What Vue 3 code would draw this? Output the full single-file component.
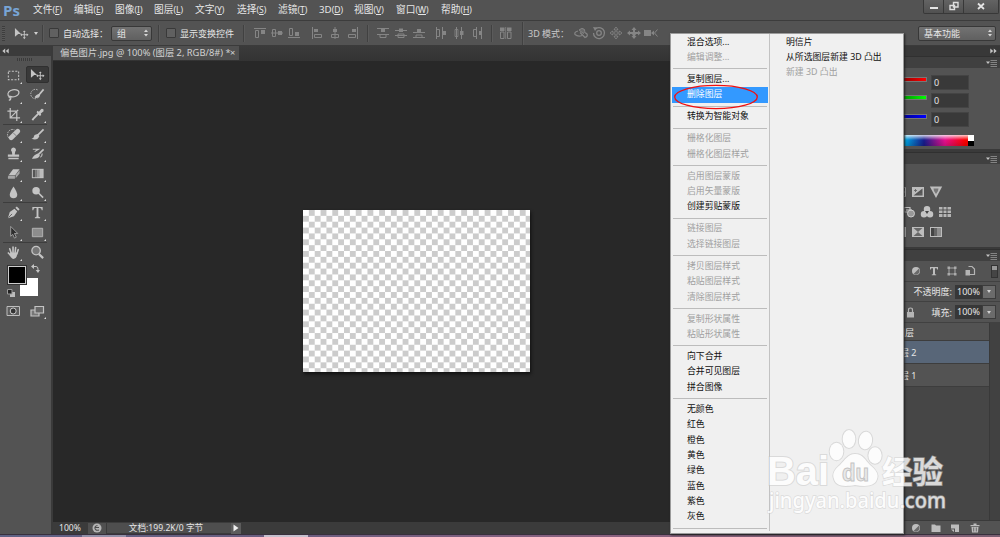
<template>
  <div class="app">
    <header class="menubar">
      <span class="logo">Ps</span>
      <nav class="menus">
        <span v-for="m in menus" :key="m.key" class="menu" :style="{ width: m.w + 'px' }">
          {{ m.label }}<small>(<u>{{ m.key }}</u>)</small>
        </span>
      </nav>
      <div class="window-buttons">
        <span class="win"><Icon name="minimize" :w="12" :h="12" /></span>
        <span class="win"><Icon name="restore" :w="12" :h="12" /></span>
        <span class="win close"><Icon name="close" :w="12" :h="12" /></span>
      </div>
    </header>

    <div class="options">
      <span class="grip"></span>
      <Icon class="opt-move" name="move" :w="15" :h="15" />
      <i class="tri opt-tri"></i>
      <i class="vsep"></i>
      <i class="check"></i>
      <span class="opt-label auto">自动选择：</span>
      <span class="select group">组<Icon name="updown" :w="8" :h="10" /></span>
      <i class="vsep after-group"></i>
      <i class="check"></i>
      <span class="opt-label show">显示变换控件</span>
      <i class="vsep"></i>
      <div class="align-icons g1"><Icon v-for="n in ['alT', 'alM', 'alB']" :key="n" :name="n" :w="12" :h="12" /></div>
      <div class="align-icons g2"><Icon v-for="n in ['alL', 'alC', 'alR']" :key="n" :name="n" :w="12" :h="12" /></div>
      <i class="vsep"></i>
      <div class="align-icons g3"><Icon v-for="n in ['diT', 'diM', 'diB']" :key="n" :name="n" :w="12" :h="12" /></div>
      <div class="align-icons g4"><Icon v-for="n in ['diL', 'diC', 'diR']" :key="n" :name="n" :w="12" :h="12" /></div>
      <i class="vsep"></i>
      <Icon class="auto-align" name="autoAlign" :w="12" :h="12" />
      <i class="vsep full"></i>
      <span class="opt-label mode">3D 模式：</span>
      <div class="mode-icons"><Icon v-for="n in ['orbit', 'roll', 'pan', 'slide', 'camera']" :key="n" :name="n" :w="14" :h="14" /></div>
      <span class="select workspace">基本功能<Icon name="updown" :w="8" :h="10" /></span>
    </div>

    <div class="body">
      <aside class="tools">
        <div class="tools-head"><Icon name="collapse" :w="7" :h="6" /></div>
        <div class="tools-grip"></div>
        <template v-for="(section, i) in toolSections" :key="i">
          <div class="tool-section">
            <span v-for="t in section" :key="t" class="tool" :class="{ active: t === 'move' }">
              <Icon :name="t" :w="15" :h="15" />
              <i v-if="t !== 'zoom' && t !== 'move'" class="corner"></i>
            </span>
          </div>
          <div v-if="i < toolSections.length - 1" class="hsep"></div>
        </template>
        <div class="swatches">
          <span class="bg"></span>
          <span class="fg"></span>
          <Icon class="swap" name="swap" :w="9" :h="9" />
          <Icon class="reset" name="reset" :w="8" :h="8" />
        </div>
        <div class="tool-section modes">
          <span class="tool"><Icon name="mask" :w="16" :h="16" /></span>
          <span class="tool"><Icon name="screen" :w="16" :h="16" /><i class="corner"></i></span>
        </div>
      </aside>

      <main class="document">
        <div class="tabs">
          <div class="tab"><span class="tab-name">偏色图片.jpg @ 100% (图层 2, RGB/8#) *</span><span>×</span></div>
        </div>
        <div class="stage"><div class="canvas"></div></div>
        <div class="status">
          <span class="zoom-level">100%</span>
          <span class="drive"><Icon name="drive" :w="10" :h="10" /></span>
          <span class="doc-size">文档:199.2K/0 字节</span>
          <span class="play"><Icon name="play" :w="6" :h="8" /></span>
        </div>
      </main>

      <aside class="panels">
        <div class="dock-head"><Icon name="expand" :w="7" :h="6" /></div>
        <div class="panel-tab"><Icon name="panelMenu" :w="11" :h="8" /></div>
        <section class="color">
          <div v-for="c in channels" :key="c" class="channel">
            <span class="track" :class="c"></span>
            <span class="value">0</span>
          </div>
          <div class="spectrum"><span class="hues"></span><span class="bw"></span></div>
        </section>
        <div class="panel-tab"><Icon name="panelMenu" :w="11" :h="8" /></div>
        <section class="adjust">
          <div class="adj-row r1"><Icon v-for="n in ['curves', 'exposure', 'vibrance']" :key="n" :name="n" :w="14" :h="14" /></div>
          <div class="adj-row r2"><Icon v-for="n in ['filter', 'mixer', 'lookup']" :key="n" :name="n" :w="14" :h="14" /></div>
          <div class="adj-row r1"><Icon v-for="(n, i) in ['selective', 'selective', 'gradmap']" :key="i" :name="n" :w="14" :h="14" /></div>
        </section>
        <div class="panel-tab"><Icon name="panelMenu" :w="11" :h="8" /></div>
        <section class="layers">
          <div class="filter-row">
            <Icon v-for="n in ['half', 'typeSmall', 'shape', 'smart']" :key="n" :name="n" :w="12" :h="12" />
            <span class="toggle"></span>
          </div>
          <div class="prop-row"><span>不透明度:</span><b>100%</b><i class="drop"><i class="tri"></i></i></div>
          <div class="prop-row fill"><Icon name="lock" :w="9" :h="11" /><span>填充:</span><b>100%</b><i class="drop"><i class="tri"></i></i></div>
          <div class="layer-list">
            <div class="rows">
              <div class="layer first">组合图层</div>
              <div class="layer selected">图层 2</div>
              <div class="layer">图层 1</div>
            </div>
            <div class="scroll"></div>
          </div>
          <div class="layer-foot">
            <Icon v-for="n in ['half', 'folder', 'newLayer', 'trash']" :key="n" :name="n" :w="12" :h="12" />
          </div>
        </section>
      </aside>
    </div>

    <footer class="taskbar"><i class="task t1"></i><i class="task t2"></i></footer>

    <div class="context">
      <div class="context-col">
        <template v-for="(group, i) in contextGroups" :key="i">
          <div v-for="item in group" :key="item" class="item" :class="{ off: item[0] === '-', hot: item === '删除图层' }">
            {{ item.replace('-', '') }}
          </div>
          <div class="line"></div>
        </template>
      </div>
      <div class="context-col second">
        <div class="item">明信片</div>
        <div class="item">从所选图层新建 3D 凸出</div>
        <div class="item off">新建 3D 凸出</div>
      </div>
    </div>

    <svg class="marker" viewBox="0 0 86 26" width="86" height="26">
      <ellipse cx="43" cy="13" rx="41.3" ry="11.6" fill="none" stroke="#f01010" stroke-width="1.3" />
    </svg>

    <svg class="watermark" viewBox="0 0 190 100" width="190" height="100">
      <g fill="#fff" stroke="#c8c8c8" stroke-opacity=".65" stroke-width="2" paint-order="stroke" opacity=".85">
        <text class="wm-bold" x="3" y="61" font-size="40" textLength="62" lengthAdjust="spacingAndGlyphs">Bai</text>
        <ellipse cx="72.500" cy="27.500" rx="6.800" ry="8.800" />
        <ellipse cx="85" cy="15" rx="6.300" ry="9" />
        <ellipse cx="101.500" cy="16.500" rx="6.600" ry="8.800" transform="rotate(8 101.500 16.500)" />
        <ellipse cx="111" cy="31.500" rx="6.600" ry="8.300" />
        <path d="M91 30C84 30 81 36 76 41C70 46 68 50 70 55C72 62 79 63 91 61C103 63 111 62 113 55C115 50 112 46 106 41C101 36 99 30 91 30Z" />
      </g>
      <text class="wm-du" x="78" y="57" font-size="24" textLength="27" lengthAdjust="spacingAndGlyphs">du</text>
      <g fill="#fff" stroke="#c8c8c8" stroke-opacity=".65" paint-order="stroke" opacity=".8">
        <text class="wm-cjk" x="118" y="58.500" font-size="30.500" stroke-width="1.500" textLength="61" lengthAdjust="spacingAndGlyphs">经验</text>
        <text class="wm-url" x="5" y="84" font-size="21" stroke-width="1.400" textLength="177" lengthAdjust="spacingAndGlyphs">jingyan.baidu.com</text>
      </g>
    </svg>
  </div>
</template>

<script setup>
import { h } from 'vue';

const menus = [
  { label: '文件', key: 'F', w: 41 },
  { label: '编辑', key: 'E', w: 41 },
  { label: '图像', key: 'I', w: 39 },
  { label: '图层', key: 'L', w: 41 },
  { label: '文字', key: 'Y', w: 42 },
  { label: '选择', key: 'S', w: 41 },
  { label: '滤镜', key: 'T', w: 41 },
  { label: '3D', key: 'D', w: 35 },
  { label: '视图', key: 'V', w: 42 },
  { label: '窗口', key: 'W', w: 45 },
  { label: '帮助', key: 'H', w: 40 }
];

const toolSections = [
  ['marquee', 'move', 'lasso', 'quick', 'crop', 'eyedropper'],
  ['heal', 'brush', 'stamp', 'history', 'eraser', 'gradient', 'blur', 'dodge'],
  ['pen', 'type', 'path', 'rect'],
  ['hand', 'zoom']
];

const channels = ['red', 'green', 'blue'];

// a leading "-" marks a disabled entry
const contextGroups = [
  ['混合选项...', '-编辑调整...'],
  ['复制图层...', '删除图层'],
  ['转换为智能对象'],
  ['-栅格化图层', '-栅格化图层样式'],
  ['-启用图层蒙版', '-启用矢量蒙版', '创建剪贴蒙版'],
  ['-链接图层', '-选择链接图层'],
  ['-拷贝图层样式', '-粘贴图层样式', '-清除图层样式'],
  ['-复制形状属性', '-粘贴形状属性'],
  ['向下合并', '合并可见图层', '拼合图像'],
  ['无颜色', '红色', '橙色', '黄色', '绿色', '蓝色', '紫色', '灰色']
];

const L = '#c4c4c4';
const D = '#858585';
const f = (d, fill = L) => ({ d, fill });
const s = (d, stroke = L, w = 1, extra = {}) => ({ d, fill: 'none', stroke, 'stroke-width': w, ...extra });

// [viewBox width, viewBox height, shapes]
const icons = {
  minimize: [12, 12, [f('M2 7H10V9H2Z', '#e4e4e4')]],
  restore: [12, 12, [s('M5.500 2.500H10V7H5.500ZM2 5.500H6.500V9.500H2Z', '#dedede', 1.4)]],
  close: [12, 12, [s('M3 3.500L9 9M9 3.500L3 9', '#e4e4e4', 1.8)]],
  updown: [8, 10, [f('M2 4L4 1.500L6 4ZM2 6H6L4 8.500Z', '#d8d8d8')]],
  collapse: [7, 6, [f('M3.200 .5V5.500L.3 3ZM6.700 .5V5.500L3.800 3Z')]],
  expand: [7, 6, [f('M.3 .5V5.500L3.200 3ZM3.800 .5V5.500L6.700 3Z')]],
  panelMenu: [11, 8, [f('M0 2.500H4L2 5Z'), s('M4.500 1.500H11M4.500 3.500H11M4.500 5.500H11M4.500 7.500H11', '#8c8c8c', .9)]],
  play: [6, 8, [f('M.5 .5L5.500 4L.5 7.500Z', '#eee')]],
  drive: [10, 10, [f('M5 .5A4.500 4.500 0 1 1 5 9.500A4.500 4.500 0 1 1 5 .5', '#b5b5b5'), s('M3 4.500H7M5.500 2.500Q2.500 3 3 5.500T7 7', '#4c4c4c', 1.1)]],

  alT: [12, 12, [s('M0 1.500H12', D), s('M1.500 3.500H4.500V10.500H1.500Z', D), f('M7 3H11V7H7Z', D)]],
  alM: [12, 12, [s('M0 6H12', D), s('M1.500 2.500H4.500V9.500H1.500Z', D), f('M7 4H11V8H7Z', D)]],
  alB: [12, 12, [s('M0 10.500H12', D), s('M1.500 1.500H4.500V8.500H1.500Z', D), f('M7 5H11V9H7Z', D)]],
  alL: [12, 12, [s('M1.500 0V12', D), f('M3 2H7V5H3Z', D), s('M3.500 7.500H10.500V10.500H3.500Z', D)]],
  alC: [12, 12, [s('M6 0V12', D), f('M4 2H8V5H4Z', D), s('M2.500 7.500H9.500V10.500H2.500Z', D)]],
  alR: [12, 12, [s('M10.500 0V12', D), f('M5 2H9V5H5Z', D), s('M1.500 7.500H8.500V10.500H1.500Z', D)]],
  diT: [12, 12, [s('M0 1.500H12M0 7.500H12', D), f('M4 2H8V5H4Z', D), s('M3 8V10.500H9V8', D)]],
  diM: [12, 12, [s('M0 3.500H12M0 8.500H12', D), f('M4 1.500H8V5H4Z', D), s('M3 7V10.500H9V7Z', D)]],
  diB: [12, 12, [s('M0 5.500H12M0 10.500H12', D), f('M4 2H8V5H4Z', D), s('M3 10V8H9V10', D)]],
  diL: [12, 12, [s('M1.500 0V12M7.500 0V12', D), s('M2 2.500H4.500V9.500H2', D), f('M8 4H11V8H8Z', D)]],
  diC: [12, 12, [s('M3.500 0V12M8.500 0V12', D), s('M2 2.500H5V9.500H2Z', D, .8), f('M7 4H10.500V8H7Z', D)]],
  diR: [12, 12, [s('M5.500 0V12M10.500 0V12', D), s('M5 2.500H2.500V9.500H5', D), f('M8 4H10.500V8H8Z', D)]],
  autoAlign: [12, 12, [f('M0 .5H4.500V4H0ZM7 .5H11.500V4H7Z', D), s('M.5 5H4V11.500H.5ZM7.500 5H11V11.500H7.500Z', D), s('M5.700 0V12', D, .8)]],
  orbit: [14, 14, [{ ...f('M5 4Q8 1 10.500 3.500Q11.500 6 9.500 7.500L5.500 4.500Z', '#6a6a6a'), stroke: D }, s('M4 5Q0 6 1 8.500Q4 11 8 9.500M6 6.500L11 11.500Q14 10.500 13 8L11 6.500', D, 1.200)]],
  roll: [14, 14, [s('M4 2.500A5.500 5.500 0 1 1 1.500 7M7 4.700A2.300 2.300 0 1 1 7 9.300A2.300 2.300 0 1 1 7 4.700', D, 1.300), f('M1 1L5.500 1.500L3 5Z', D)]],
  pan: [14, 14, [s('M7 1L9 3.500H7.800V6.200H10.500V5L13 7L10.500 9V7.800H7.800V10.500H9L7 13L5 10.500H6.200V7.800H3.500V9L1 7L3.500 5V6.200H6.200V3.500H5Z', D, .8)]],
  slide: [14, 14, [f('M7 1L9.500 4H8V6H11V4.500L14 7L11 9.500V8H9L8 10H9.500L7 13L4.500 10H6L5 8H3V9.500L0 7L3 4.500V6H6V4H4.500Z', D)]],
  camera: [14, 14, [f('M0 4H7V10H0ZM7 7L10 4.500V9.500Z', D), s('M13.500 3.500L10.500 7L13.500 10.500', D)]],

  marquee: [16, 16, [s('M2.500 3.500H13.500V12.500H2.500Z', L, 1.100, { 'stroke-dasharray': '2.2 1.500' })]],
  move: [16, 16, [f('M1 2L7.500 8.500H4.500L1 11.500Z'), s('M11 5.500V13M7.200 9.300H14.800', L, 1), f('M9.500 6.500L11 4.700L12.500 6.500ZM9.500 12L11 14L12.500 12ZM8.500 7.800L6.700 9.300L8.500 10.800ZM13.500 7.800L15.500 9.300L13.500 10.800Z')]],
  lasso: [16, 16, [s('M4 10.500C1 9 1.500 5.500 5 3.800C9 2 14 3 13.800 6.200C13.500 9.500 8 11.500 4.500 10C2.500 9.500 3 12 5 11.500C5.500 13 4.500 14 3 14', L, 1.300)]],
  quick: [16, 16, [s('M8 3A5 5 0 1 0 8 12', L, 1, { 'stroke-dasharray': '1.600 1.200' }), s('M14.500 2.500L9 9', L, 1.800), f('M9.500 7.500Q6 8 5 11.500Q10 12.500 10.800 9Z')]],
  crop: [16, 16, [s('M4.500 1V11.500H15M1.500 4.500H11.500V15M5 11L13 3', L, 1.300)]],
  eyedropper: [16, 16, [s('M9.500 6.500L4 12L2.500 14', L, 2), f('M8 4L9.500 5L12 2Q15 1.500 14.500 4.500L11.500 7L12 8.500L10.500 9.500L7 5.500Z')]],
  heal: [16, 16, [s('M5 13A5 5 0 1 1 9 3', L, 1, { 'stroke-dasharray': '1.600 1' }), s('M5.500 11.500L12.500 4.500', L, 5, { 'stroke-linecap': 'round' }), s('M8 6.500L11 9.500', '#777', 1)]],
  brush: [16, 16, [s('M14.500 2.500L8 9', L, 1.900), f('M8.200 7.500Q4 8 4 11Q3 12.500 1.500 12.500Q8 15 10 9.500Z')]],
  stamp: [16, 16, [f('M8 1.500A2.600 2.600 0 0 1 9.800 6L9.300 9H14V11.500H2V9H6.700L6.200 6A2.600 2.600 0 0 1 8 1.500M2.500 12.500H13.500V14H2.500Z')]],
  history: [16, 16, [s('M14.500 3.500L8.500 9.500', L, 1.800), f('M8.500 8Q4.500 9 2 13.500Q9 14 10.500 10Z'), s('M3 3.500H9L5 6M11 12Q13 11 13 8', L, 1.200)]],
  eraser: [16, 16, [f('M7.500 3.500H14.500L10 9.500H3Z'), f('M2.700 10.200H9.500V13.500H2.200Q1.500 12 2.700 10.200M10.300 9.800L14.500 4.500V8L10.300 13Z', '#a5a5a5')]],
  gradient: [16, 16, [f('M2 3H14.500V13H2Z'), f('M3 4H5.500V12H3Z', '#555'), f('M5.500 4H8V12H5.500Z', '#777'), f('M8 4H10.500V12H8Z', '#999'), f('M10.500 4H13.500V12H10.500Z', '#bbb')]],
  blur: [16, 16, [f('M8 1.500Q12 7.500 12 10.200A4 4 0 0 1 4 10.200Q4 7.500 8 1.500')]],
  dodge: [16, 16, [f('M6.500 2A4 4 0 1 1 6.500 10A4 4 0 1 1 6.500 2'), s('M9 8.500L14 13.500', L, 1.700)]],
  pen: [16, 16, [f('M2 14L4 7.500L9 4L12 7L8.500 12ZM10 3L11.500 1.500L14.500 4.500L13 6Z'), s('M2.500 13.500L6.500 9.500', '#555', .9)]],
  type: [16, 16, [f('M2.500 2H13.500V5.500H12.500Q12.300 3.300 10.500 3.300H9V12Q9 13 10.800 13V14H5.200V13Q7 13 7 12V3.300H5.500Q3.700 3.300 3.500 5.500H2.500Z')]],
  path: [16, 16, [{ ...f('M5 1.500L12.500 9H9L11 13L9 14L7.200 10L5 12Z', '#2e2e2e'), stroke: '#aaa', 'stroke-width': .9 }]],
  rect: [16, 16, [{ ...f('M2.500 3.500H13.500V12.500H2.500Z', '#8d8d8d'), stroke: '#b5b5b5' }]],
  hand: [16, 16, [s('M5.700 9L4 4M7.500 8V2.200M9.700 8L10.300 2.700M11.500 9.500L13 5M5.500 11.500L2.500 8.500', L, 1.700, { 'stroke-linecap': 'round' }), f('M4.500 8H12.300L11.500 12Q10.500 15 8 15Q6 15 4 11Z')]],
  zoom: [16, 16, [{ ...f('M6.500 1.500A4.500 4.500 0 1 1 6.500 10.500A4.500 4.500 0 1 1 6.500 1.500', '#777'), stroke: L, 'stroke-width': 1.400 }, s('M9.500 9.500L14 14', L, 2.300)]],
  swap: [9, 9, [s('M2 2.500H5Q7 2.500 7 5V7', L, 1), f('M0 2.500L3 0V5ZM4.700 6H9L7 9Z')]],
  reset: [8, 8, [f('M3 3H8V8H3Z', '#bbb'), { ...f('M.5 .5H5V5H.5Z', '#222'), stroke: '#999' }]],
  mask: [16, 16, [{ ...f('M2 3.500H14.500V12.500H2Z', '#5c5c5c'), stroke: '#bdbdbd' }, { ...f('M8.200 5A3 3 0 1 1 8.200 11A3 3 0 1 1 8.200 5', '#333'), stroke: '#ccc' }]],
  screen: [16, 16, [{ ...f('M2 7H10V13H2Z', '#777'), stroke: L, 'stroke-width': 1.200 }, { ...f('M6 3.500H14.500V10H6Z', '#666'), stroke: L, 'stroke-width': 1.200 }]],

  curves: [14, 14, [s('M1.500 2.500H12.500V11.500H1.500ZM1.500 7H12M7 2V11', '#b5b5b5')]],
  exposure: [14, 14, [f('M1 2H13V12H1Z', '#bdbdbd'), f('M2.500 10.500L11.500 3.500V10.500Z', '#555'), s('M3 5.500H6M4.500 4V7M8 9H11', '#666', .9)]],
  vibrance: [14, 14, [f('M.8 1.500H13.200L7 13Z', '#bdbdbd'), f('M4.500 3.500H9.500L9 6L7 9L5 6Z', '#777')]],
  filter: [14, 14, [s('M2 2.500H8V7H2Z', '#bdbdbd', 1.200), { ...f('M9 5A3.500 3.500 0 1 1 9 12A3.500 3.500 0 1 1 9 5', '#999'), stroke: '#ccc' }, s('M4 5H10', '#ccc')]],
  mixer: [14, 14, [f('M7 1A3 3 0 1 1 7 7.500A3 3 0 1 1 7 1M4 6A3.200 3.200 0 1 1 4 12.500A3.200 3.200 0 1 1 4 6M10 6A3.200 3.200 0 1 1 10 12.500A3.200 3.200 0 1 1 10 6', '#c4c4c4'), f('M5 6H9L7 9Z', '#444')]],
  lookup: [14, 14, [f('M1 2H13V12H1Z', '#b5b5b5'), s('M1 5H13M1 8.500H13M5 2V12M9 2V12', '#484848', .9)]],
  selective: [14, 14, [f('M1 2H13V12H1Z', '#bdbdbd'), f('M2.500 3L7 7L11.500 3ZM2.500 11L7 7L11.500 11Z', '#686868')]],
  gradmap: [14, 14, [f('M1 2H13V12H1Z', '#bdbdbd'), f('M2 3H5V11H2Z', '#444'), f('M5 3H8V11H5Z', '#666'), f('M8 3H12V11H8Z', '#8e8e8e')]],
  half: [12, 12, [f('M6 2A4 4 0 1 1 6 10A4 4 0 1 1 6 2', '#bdbdbd'), f('M9 3.500L3.500 9Q7 11 9 8Q10 5.500 9 3.500', '#6a6a6a')]],
  typeSmall: [12, 12, [f('M2 2H10V4.500H9.200L8.700 3.200H7V9.200L8.200 9.500V10.200H3.800V9.500L5 9.200V3.200H3.300L2.800 4.500H2Z', '#bdbdbd')]],
  shape: [12, 12, [s('M3 3H9V9H3Z', '#aaa', 1), f('M1.500 1.500H4V4H1.500ZM8 1.500H10.500V4H8ZM1.500 8H4V10.500H1.500ZM8 8H10.500V10.500H8Z', '#aaa')]],
  smart: [12, 12, [s('M4.500 1.500H8L10.500 4V9.500H6', '#b5b5b5', 1.200), f('M1.500 5H6V10.500H1.500Z', '#b5b5b5')]],
  lock: [9, 11, [f('M1 5H8V10.500H1Z', '#b5b5b5'), s('M2.500 5V3Q2.500 1 4.500 1T6.500 3V5', '#b5b5b5', 1.200)]],
  folder: [12, 12, [f('M1.500 2.500H5L6 3.500H10.500V10H1.500Z', '#bdbdbd')]],
  newLayer: [12, 12, [f('M2 2.500H10V10H6V6.500H2ZM2 7.500H5V10Z', '#bdbdbd')]],
  trash: [12, 12, [f('M1.500 3H10.500V4.200H1.500ZM4.500 1.500H7.500V3H4.500ZM2.500 5H9.500L9 10.500H3Z', '#bdbdbd'), s('M4.700 5.500V9.500M7.300 5.500V9.500', '#555', .8)]]
};

const Icon = ({ name, w, h: height }) => {
  const [vw, vh, shapes] = icons[name];
  return h('svg', { class: 'icon', viewBox: `0 0 ${vw} ${vh}`, width: w, height }, shapes.map(shape => h('path', shape)));
};
Icon.props = ['name', 'w', 'h'];
</script>

<style>
body {
  margin: 0;
  overflow: hidden;
}
</style>

<style scoped>
.app {
  position: relative;
  display: flex;
  flex-direction: column;
  width: 1000px;
  height: 537px;
  overflow: hidden;
  background: #535353;
  color: #e6e6e6;
  font-family: "Noto Sans", "Noto Sans CJK SC", sans-serif;
  font-size: 9px;
  line-height: 1;
}

.app * {
  box-sizing: border-box;
}

.icon {
  display: block;
  flex: none;
}

.menubar {
  display: flex;
  flex: none;
  align-items: center;
  height: 21px;
  border-bottom: 1px solid #3c3c3c;
}

.logo {
  width: 33px;
  padding-left: 3px;
  color: #78a5d6;
  font: bold 15px "Open Sans", sans-serif;
}

.menus {
  display: flex;
  flex: 1;
  font-size: 9.7px;
}

.menu {
  white-space: nowrap;
}

.menu small {
  font-size: 8.6px;
}

.window-buttons {
  display: flex;
  align-self: flex-start;
  width: 76px;
  height: 14px;
  margin-right: 1px;
  border: 1px solid #383838;
  border-top: 0;
  border-radius: 0 0 2px 2px;
  background: linear-gradient(#636363, #515151);
}

.win {
  display: flex;
  justify-content: center;
  width: 20px;
  border-right: 1px solid #383838;
}

.close {
  width: 34px;
  border: 0;
}

.options {
  display: flex;
  flex: none;
  align-items: center;
  height: 24px;
}

.grip {
  width: 3px;
  height: 15px;
  margin: 0 8px 0 2px;
  background: repeating-linear-gradient(#3d3d3d 0 1px, #595959 1px 2px);
}

.opt-move {
  margin-left: 1px;
}

.tri {
  border: 2px solid transparent;
  border-top: 3px solid #cfcfcf;
  border-bottom: 0;
}

.opt-tri {
  margin: 0 4px 0 5px;
}

.vsep {
  width: 2px;
  height: 17px;
  border-left: 1px solid #414141;
  border-right: 1px solid #5b5b5b;
}

.full {
  height: 23px;
}

.check {
  width: 10px;
  height: 10px;
  margin-left: 5px;
  border: 1px solid #393939;
  border-radius: 1px;
  background: #606060;
}

.opt-label {
  flex: none;
  padding-left: 4px;
  white-space: nowrap;
}

.auto {
  width: 52px;
}

.show {
  width: 67px;
}

.select {
  display: flex;
  flex: none;
  align-items: center;
  justify-content: space-between;
  height: 15px;
  padding: 0 1px 0 5px;
  border: 1px solid #383838;
  border-radius: 2px;
  background: linear-gradient(#727272, #606060);
}

.group {
  width: 41px;
}

.after-group {
  margin-right: 1px;
  margin-left: 6px;
}

.align-icons {
  display: flex;
}

.g1 {
  gap: 5px;
  margin-left: 9px;
}

.g2 {
  gap: 6px;
  margin: 0 8px 0 11px;
}

.g3 {
  gap: 6px;
  margin-left: 8px;
}

.g4 {
  gap: 6px;
  margin: 0 8px 0 10px;
}

.auto-align {
  margin: 0 10px 0 7px;
}

.mode {
  width: 50px;
  padding-left: 4px;
  color: #c9c9c9;
}

.mode-icons {
  display: flex;
  gap: 3.5px;
}

.workspace {
  width: 78px;
  margin: 0 4px 0 auto;
}

.body {
  display: flex;
  flex: none;
  height: 489px;
  border-top: 1px solid #3b3b3b;
}

.tools {
  flex: none;
  width: 53px;
  border-right: 2px solid #3a3a3a;
}

.tools-head {
  height: 10px;
  padding: 2px;
  background: #3b3b3b;
}

.tools-grip {
  width: 15px;
  height: 3px;
  margin: 2px 0 5px 17px;
  background: repeating-linear-gradient(90deg, #3b3b3b 0 1px, #555 1px 2px);
}

.tool-section {
  display: grid;
  grid-template-columns: 24px 24px;
  grid-auto-rows: 19.3px;
  padding-left: 1px;
}

.tool {
  position: relative;
  display: flex;
  align-items: center;
  justify-content: center;
}

.active {
  margin: 0 0 2px 1px;
  border: 1px solid #303030;
  border-radius: 2px;
  background: #393939;
}

.corner {
  position: absolute;
  right: 3px;
  bottom: 1px;
  border: 1px solid #ddd;
  border-top-color: transparent;
  border-left-color: transparent;
}

.hsep {
  height: 1px;
  margin: 0 4px 0 3px;
  background: #3d3d3d;
}

.swatches {
  position: relative;
  height: 39px;
}

.fg,
.bg {
  position: absolute;
  width: 18px;
  height: 18px;
}

.fg {
  top: 4px;
  left: 8px;
  border: 1px solid #ccc;
  outline: 1px solid #333;
  background: #000;
}

.bg {
  top: 16px;
  left: 20px;
  background: #fff;
}

.swap {
  position: absolute;
  top: 2px;
  left: 31px;
}

.reset {
  position: absolute;
  top: 27px;
  left: 7px;
}

.document {
  display: flex;
  flex: 1;
  flex-direction: column;
  background: #282828;
}

.tabs {
  height: 15px;
  background: linear-gradient(#3b3b3b, #333);
}

.tab {
  display: flex;
  align-items: center;
  width: 186px;
  height: 14px;
  padding-left: 7px;
  background: #505050;
  color: #d2d2d2;
  font-size: 9.3px;
}

.tab-name {
  flex: none;
  width: 170px;
  white-space: nowrap;
}

.stage {
  flex: 1;
  padding: 149px 0 0 250px;
}

.canvas {
  width: 227px;
  height: 162px;
  background: repeating-conic-gradient(#ccc 0 25%, #fff 0 50%) 0 0 / 11.72px 11.72px;
  box-shadow: 1px 2px 3px #111;
}

.status {
  display: flex;
  height: 12px;
  align-items: center;
  background: #3b3b3b;
  font-size: 8.6px;
}

.zoom-level {
  width: 35px;
  padding-left: 6px;
}

.drive {
  display: flex;
  width: 18px;
  height: 11px;
  justify-content: center;
  background: #505050;
}

.doc-size {
  width: 124px;
  margin-left: 1px;
  padding: 1px 6px 1px 0;
  background: #4e4e4e;
  text-align: center;
  font-size: 8.6px;
}

.play {
  display: flex;
  align-items: center;
  justify-content: center;
  width: 10px;
  height: 11px;
  background: #5c5c5c;
}

.panels {
  display: flex;
  flex: none;
  flex-direction: column;
  width: 130px;
}

.dock-head {
  display: flex;
  flex: none;
  justify-content: flex-end;
  height: 10px;
  padding: 2px 3px;
  background: #383838;
}

.panel-tab {
  display: flex;
  flex: none;
  align-items: center;
  justify-content: flex-end;
  height: 12px;
  padding-right: 3px;
  border-top: 1px solid #303030;
  background: #404040;
}

.color {
  flex: none;
  height: 84px;
  padding: 7px 26px 0 0;
  border-bottom: 3px solid #3a3a3a;
}

.channel {
  display: flex;
  align-items: flex-start;
  height: 18.4px;
}

.track {
  width: 57px;
  height: 5px;
  margin: 2px 4px 0 0;
  border: 1px solid #777;
}

.red {
  background: linear-gradient(90deg, #000, #f00);
}

.green {
  background: linear-gradient(90deg, #000, #0f0);
}

.blue {
  background: linear-gradient(90deg, #000, #00f);
}

.value {
  width: 38px;
  height: 15px;
  padding: 2px;
  border: 1px solid #444;
  background: #393939;
}

.spectrum {
  display: flex;
  height: 11px;
  margin-top: 5px;
}

.hues {
  flex: 1;
  background: linear-gradient(rgba(255, 255, 255, .8), transparent 45%, rgba(0, 0, 0, .15)), linear-gradient(90deg, #0c0, #00a0e0 36px, #171c8c 54px, #e6108c 75px, #f00 95px);
}

.bw {
  width: 6px;
  background: linear-gradient(#fff 50%, #000 50%);
}

.adjust {
  display: flex;
  flex: none;
  flex-direction: column;
  gap: 6px;
  height: 85px;
  padding-top: 21px;
  border-bottom: 2px solid #3a3a3a;
}

.adj-row {
  display: flex;
  gap: 4px;
}

.r1 {
  padding-left: 23px;
}

.r2 {
  padding-left: 32px;
}

.layers {
  display: flex;
  flex: 1;
  flex-direction: column;
}

.filter-row {
  display: flex;
  align-items: center;
  gap: 6px;
  height: 21px;
  padding-left: 40px;
  border-bottom: 1px solid #414141;
}

.toggle {
  width: 7px;
  height: 13px;
  margin-left: 9px;
  border: 1px solid #333;
  background: linear-gradient(#999 35%, #454545 35%);
}

.prop-row {
  display: flex;
  align-items: center;
  justify-content: flex-end;
  height: 20px;
  padding-right: 4px;
  border-bottom: 1px solid #414141;
}

.prop-row span {
  margin-right: 3px;
}

.prop-row b {
  width: 27px;
  height: 14px;
  padding: 2px;
  background: #373737;
  font-weight: normal;
}

.fill {
  height: 21px;
}

.fill .icon {
  margin-right: 17px;
}

.drop {
  display: flex;
  align-items: center;
  justify-content: center;
  width: 14px;
  height: 14px;
  border: 1px solid #3c3c3c;
  background: #6b6b6b;
}

.layer-list {
  display: flex;
  flex: 1;
  background: #464646;
}

.rows {
  width: 119px;
}

.layer {
  height: 23px;
  padding: 7px 0 0 21px;
  border-bottom: 1px solid #3d3d3d;
  background: #535353;
}

.first {
  height: 18px;
  padding: 5px 0 0 8px;
}

.selected {
  background: #586678;
}

.scroll {
  flex: 1;
  border-left: 1px solid #393939;
  background: #414141;
}

.layer-foot {
  display: flex;
  gap: 7.5px;
  height: 14px;
  padding: 1px 0 0 40px;
  border-top: 1px solid #3a3a3a;
}

.taskbar {
  display: flex;
  flex: none;
  height: 3px;
  border-top: 1px solid #38303c;
  background: linear-gradient(90deg, #5f6386, #6c5e80 30%, #8b6280 60%, #7a5f72);
}

.task {
  width: 44px;
  background: #9290a8;
}

.t1 {
  margin-left: 82px;
}

.t2 {
  margin-left: 138px;
  background: #c5c0cd;
}

.context {
  position: absolute;
  top: 33px;
  left: 670px;
  display: flex;
  width: 234px;
  height: 501px;
  border: 1px solid #9b9b9b;
  background: #f0f0f0;
  box-shadow: 1px 1px 2px #222;
  color: #111;
  font-size: 8.85px;
}

.context-col {
  width: 98px;
  padding: .6px 1px 0 1px;
}

.item {
  height: 15.4px;
  padding-left: 15px;
  line-height: 15.4px;
  white-space: nowrap;
}

.off {
  color: #a0a0a0;
}

.hot {
  background: #3399ff;
  color: #fff;
}

.line {
  height: 1px;
  margin: 2.8px 1px;
  background: #bcbcbc;
}

.second {
  flex: 1;
  height: 497px;
  border-left: 1px solid #c2c2c2;
}

.marker {
  position: absolute;
  top: 84px;
  left: 673px;
}

.watermark {
  position: absolute;
  top: 424px;
  left: 764px;
}

.wm-bold {
  font-family: "Liberation Sans", sans-serif;
  font-weight: bold;
}

.wm-du {
  fill: #e9e9e9;
  stroke: #c4c4c4;
  stroke-width: 1px;
  font-family: "Liberation Sans", sans-serif;
  font-weight: bold;
}

.wm-cjk {
  font-family: "Noto Sans CJK SC", sans-serif;
  font-weight: bold;
}

.wm-url {
  font-family: "Noto Sans", sans-serif;
  font-weight: 500;
}
</style>
